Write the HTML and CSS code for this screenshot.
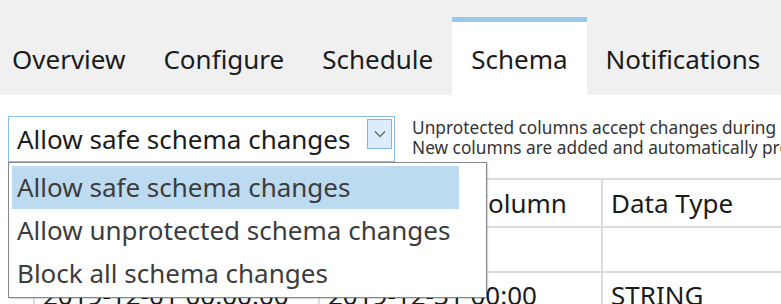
FILE: index.html
```html
<!DOCTYPE html>
<html>
<head>
    <title>Schema</title>
    <link rel="stylesheet" href="styles.css">
</head>
<body>
    <!-- tab strip -->
    <div class="tabbar">
        <div class="tabs">
            <div class="tab">Overview</div>
            <div class="tab">Configure</div>
            <div class="tab">Schedule</div>
            <div class="tab active">Schema</div>
            <div class="tab">Notifications</div>
        </div>
    </div>

    <div class="content">
        <div class="policy-row">
            <div class="combo">
                <span class="combo-value">Allow safe schema changes</span>
                <span class="combo-btn">
                    <svg width="12" height="8" viewBox="0 0 12 8"><polyline points="1,1.5 6,6.5 11,1.5" fill="none" stroke="#6d6d6d" stroke-width="1.5"/></svg>
                </span>
            </div>
            <div class="policy-help">
                <div>Unprotected columns accept changes during sync.</div>
                <div>New columns are added and automatically protected.</div>
            </div>
        </div>

        <!-- dropdown list, open over the table -->
        <ul class="combo-list">
            <li class="selected">Allow safe schema changes</li>
            <li>Allow unprotected schema changes</li>
            <li>Block all schema changes</li>
        </ul>

        <div class="schema-grid">
            <div class="cell first"></div>
            <div class="cell">Name</div>
            <div class="cell">Timestamp Column</div>
            <div class="cell">Data Type</div>

            <div class="cell first"></div>
            <div class="cell"></div>
            <div class="cell"></div>
            <div class="cell"></div>

            <div class="cell first"></div>
            <div class="cell">2019-12-01 00:00:00</div>
            <div class="cell">2019-12-31 00:00</div>
            <div class="cell">STRING</div>
        </div>
    </div>
</body>
</html>
```

FILE: styles.css
```css
html, body { margin: 0; overflow: hidden; }
body {
    width: 781px;
    height: 304px;
    background: #fff;
    color: #1b1b1b;
    font-family: "Noto Sans", "Open Sans", sans-serif;
}

.tabbar { background: #f0f0f0; height: 95px; display: flex; align-items: flex-end; }
.tabs { display: flex; margin-left: -7px; }
.tab {
    height: 73px;
    padding: 0 19px;
    border-top: 5px solid transparent;
    display: flex;
    align-items: center;
    font-size: 26px;
    white-space: nowrap;
}
.tab.active { background: #fff; border-top-color: #97c8ee; }

.content { position: relative; padding: 21px 0 0 8px; }
.policy-row { display: flex; align-items: flex-start; }
.combo {
    flex: none;
    width: 385px;
    height: 44px;
    border: 1px solid #8fbdea;
    display: flex;
    align-items: flex-start;
    justify-content: space-between;
}
.combo-value { font-size: 26px; line-height: 44px; padding-left: 8px; white-space: nowrap; }
.combo-btn {
    width: 23px;
    height: 28px;
    margin: 2px 2px 0 0;
    background: #dcecfc;
    border: 1px solid #7eb4ea;
    display: flex;
    align-items: center;
    justify-content: center;
}
.policy-help {
    margin-left: 17px;
    padding-top: 2px;
    font-size: 17.3px;
    line-height: 20px;
    color: #333;
    white-space: nowrap;
}

.combo-list {
    position: absolute;
    left: 8px;
    top: 67px;
    width: 479px;
    height: 136px;
    margin: 0;
    padding: 3px 0 0 3px;
    box-sizing: border-box;
    list-style: none;
    background: #fff;
    border: 1px solid #828790;
    box-shadow: 1px 1px 1px rgba(0, 0, 0, 0.15);
    z-index: 2;
}
.combo-list li {
    width: 447px;
    height: 43px;
    padding-left: 5px;
    box-sizing: border-box;
    line-height: 43px;
    font-size: 26px;
    color: #3c3c3c;
    white-space: nowrap;
}
.combo-list li.selected { background: #bddbf0; }

.schema-grid {
    margin-top: 16px;
    display: grid;
    grid-template-columns: 25px 285px 283px 200px;
    grid-template-rows: 48px 45px 48px;
    font-size: 26px;
    white-space: nowrap;
}
.cell {
    border-top: 2px solid #dcdcdc;
    border-left: 2px solid #dcdcdc;
    padding: 0 8px;
    display: flex;
    align-items: center;
    overflow: hidden;
}
.cell.first { border-left: none; }
.schema-grid .cell:nth-child(n+9) { align-items: flex-start; padding-top: 4px; }
```
